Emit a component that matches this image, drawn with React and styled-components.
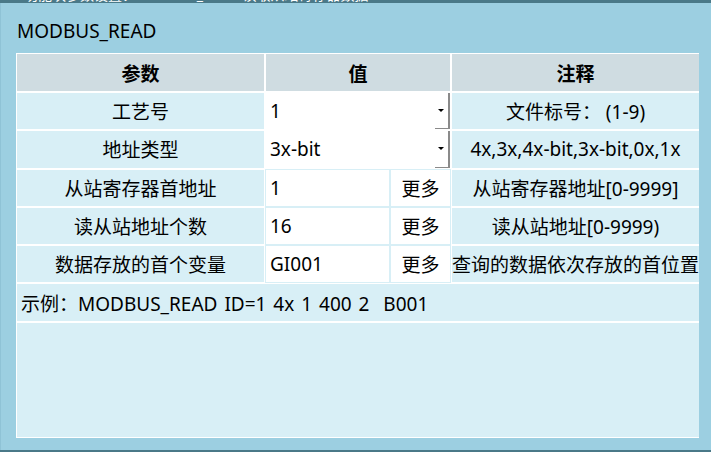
import React from "react"
import styled, { createGlobalStyle } from "styled-components"

const GlobalStyle = createGlobalStyle`
  html, body {
    margin: 0;
    padding: 0;
    background: #9ccfe1;
  }
  * { box-sizing: border-box; }
`

const font = `"Noto Sans", "Noto Sans CJK SC", sans-serif`

const Screen = styled.div`
  width: 711px;
  height: 452px;
  display: flex;
  flex-direction: column;
  font-family: ${font};
  color: #000;
  overflow: hidden;
`

const Bar = styled.div`
  flex: none;
  height: ${p => p.$h}px;
  background: #4a7988;
  overflow: hidden;
  color: #fff;
  font-size: 14px;
  line-height: 14px;
  padding-left: 24px;
  white-space: nowrap;
  span {
    display: block;
    margin-top: -12px;
  }
`

const Panel = styled.div`
  flex: 1;
  min-height: 0;
  display: flex;
  flex-direction: column;
  padding: 0 12px 12px 15px;
  border-left: 1px solid #8fc3d6;
  background: #9ccfe1;
`

const Title = styled.div`
  flex: none;
  height: 50px;
  display: flex;
  align-items: center;
  padding: 6px 0 0 1px;
  font-size: 19px;
`

const Table = styled.div`
  flex: 1;
  min-height: 0;
  display: grid;
  grid-template-columns: 247px 123px 59px 247px;
  grid-template-rows: 37px repeat(6, 36.3px) 1fr;
  gap: 2px;
  padding: 1px;
  background: #fff;
`

const Cell = styled.div`
  display: flex;
  align-items: center;
  justify-content: ${p => (p.$left ? "flex-start" : "center")};
  padding: ${p => (p.$left ? "0 0 0 4px" : "0")};
  grid-column: ${p => p.$span || "auto"};
  background: ${p => (p.$white ? "#fff" : "#d8eff6")};
  box-shadow: ${p => (p.$white ? "0 0 0 1px #d8eff6" : "none")};
  font-size: 19px;
  white-space: nowrap;
  overflow: hidden;
`

const HeadCell = styled(Cell)`
  background: #cfdce1;
  font-weight: 700;
`

const ExampleCell = styled(Cell)`
  word-spacing: 2px;
`

const SelectBox = styled.div`
  grid-column: 2 / 4;
  display: flex;
  align-items: stretch;
  background: #fff;
  font-size: 19px;
`

const SelectText = styled.div`
  flex: 1;
  display: flex;
  align-items: center;
  padding-left: 4px;
`

const DropButton = styled.div`
  width: 15px;
  display: flex;
  align-items: center;
  justify-content: center;
  border-right: 2px solid #8a8a8a;
  border-bottom: 1.5px solid #8a8a8a;
  padding-right: 1px;
  &::after {
    content: "";
    border-left: 3.5px solid transparent;
    border-right: 3.5px solid transparent;
    border-top: 3.5px solid #000;
  }
`

const Empty = styled.div`
  grid-column: 1 / 5;
  background: #d8eff6;
`

const rows = [
  { name: "从站寄存器首地址", value: "1", note: "从站寄存器地址[0-9999]" },
  { name: "读从站地址个数", value: "16", note: "读从站地址[0-9999)" },
  { name: "数据存放的首个变量", value: "GI001", note: "查询的数据依次存放的首位置" },
]

export default function App() {
  return (
    <Screen>
      <GlobalStyle />
      <Bar $h={3}><span>功能块参数设置：MODBUS_READ 读取从站寄存器数据</span></Bar>
      <Panel>
        <Title>MODBUS_READ</Title>
        <Table>
          <HeadCell>参数</HeadCell>
          <HeadCell $span="2 / 4">值</HeadCell>
          <HeadCell>注释</HeadCell>

          <Cell>工艺号</Cell>
          <SelectBox>
            <SelectText>1</SelectText>
            <DropButton />
          </SelectBox>
          <Cell>文件标号： (1-9)</Cell>

          <Cell>地址类型</Cell>
          <SelectBox>
            <SelectText>3x-bit</SelectText>
            <DropButton />
          </SelectBox>
          <Cell>4x,3x,4x-bit,3x-bit,0x,1x</Cell>

          {rows.map(r => (
            <React.Fragment key={r.name}>
              <Cell>{r.name}</Cell>
              <Cell $white $left>{r.value}</Cell>
              <Cell $white>更多</Cell>
              <Cell>{r.note}</Cell>
            </React.Fragment>
          ))}

          <ExampleCell $span="1 / 5" $left>示例：MODBUS_READ ID=1 4x 1 400 2&nbsp;&nbsp;B001</ExampleCell>
          <Empty />
        </Table>
      </Panel>
      <Bar $h={2} />
    </Screen>
  )
}
